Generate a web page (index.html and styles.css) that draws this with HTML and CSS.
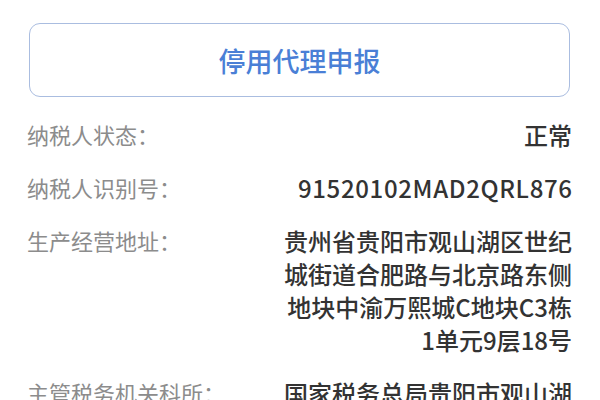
FILE: index.html
```html
<!DOCTYPE html>
<html lang="zh-CN">
<head>
<meta charset="utf-8">
<link rel="stylesheet" href="styles.css">
</head>
<body>
<div class="page">
  <div class="btn">停用代理申报</div>
  <div class="rows">
    <div class="row">
      <div class="label">纳税人状态：</div>
      <div class="value">正常</div>
    </div>
    <div class="row">
      <div class="label">纳税人识别号：</div>
      <div class="value num">91520102MAD2QRL876</div>
    </div>
    <div class="row">
      <div class="label">生产经营地址：</div>
      <div class="value">贵州省贵阳市观山湖区世纪<br>城街道合肥路与北京路东侧<br>地块中渝万熙城C地块C3栋<br>1单元9层18号</div>
    </div>
    <div class="row">
      <div class="label">主管税务机关科所：</div>
      <div class="value">国家税务总局贵阳市观山湖<br>区税务局</div>
    </div>
  </div>
</div>
</body>
</html>
```
FILE: styles.css
```css
html, body {
  margin: 0;
  padding: 0;
  background: #ffffff;
  font-family: "Noto Sans CJK SC", "Noto Sans", sans-serif;
}
.page {
  padding: 23px 30px 0 29px;
}
.btn {
  height: 72px;
  border: 1.5px solid #aabde0;
  border-radius: 11px;
  display: flex;
  align-items: center;
  justify-content: center;
  color: #4a7fd6;
  font-size: 27px;
  font-weight: 500;
}
.rows {
  margin-top: 21px;
  margin-left: -2px;
  margin-right: -2px;
}
.row {
  display: flex;
  justify-content: space-between;
  margin-bottom: 20px;
  line-height: 33px;
}
.label {
  color: #8c8c8c;
  font-size: 22px;
  width: 190px;
  flex: none;
  white-space: nowrap;
}
.value {
  color: #333333;
  font-size: 24px;
  font-weight: 500;
  text-align: right;
  flex: 1;
}
.num {
  letter-spacing: 0.65px;
  margin-right: -0.65px;
}
```
